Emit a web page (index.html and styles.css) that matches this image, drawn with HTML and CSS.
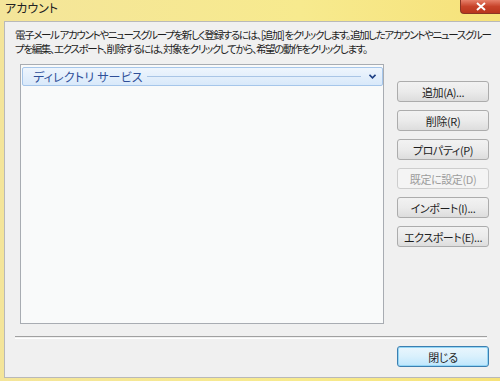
FILE: index.html
```html
<!DOCTYPE html>
<html lang="ja">
<head>
    <meta charset="UTF-8">
    <title>アカウント</title>
    <link rel="stylesheet" href="styles.css">
</head>
<body>
    <div class="window">
        <div class="titlebar">
            <span class="title">アカウント</span>
            <span class="close-btn">
                <svg width="12" height="9" viewBox="0 0 12 9"><path d="M2 1 L10 8 M10 1 L2 8" stroke="#fff" stroke-width="2"/></svg>
            </span>
        </div>
        <div class="dialog">
            <p class="intro">電子メール アカウントやニュースグループを新しく登録するには、[追加] をクリックします。追加したアカウントやニュースグループを編集、エクスポート、削除するには、対象をクリックしてから、希望の動作をクリックします。</p>
            <div class="main">
                <div class="account-list">
                    <div class="group-header">
                        <span class="group-name">ディレクトリ サービス</span>
                        <span class="group-line"></span>
                        <svg class="chevron" width="7" height="5" viewBox="0 0 7 5"><path d="M0.5 0.8 L3.5 3.8 L6.5 0.8" fill="none" stroke="#1d3f84" stroke-width="1.6"/></svg>
                    </div>
                </div>
                <div class="actions">
                    <button class="btn">追加(A)...</button>
                    <button class="btn">削除(R)</button>
                    <button class="btn">プロパティ(P)</button>
                    <button class="btn" disabled>既定に設定(D)</button>
                    <button class="btn">インポート(I)...</button>
                    <button class="btn">エクスポート(E)...</button>
                </div>
            </div>
            <div class="separator"></div>
            <div class="footer">
                <button class="btn btn-default">閉じる</button>
            </div>
        </div>
    </div>
</body>
</html>
```
FILE: styles.css
```css
body {
    margin: 0;
    font-family: "Noto Sans CJK JP", sans-serif;
    font-feature-settings: "palt";
    font-size: 12px;
    color: #1e1e1e;
    background-color: #f3e27c;
}
.window {
    width: 500px;
    height: 381px;
    display: flex;
    flex-direction: column;
    overflow: hidden;
    background: linear-gradient(to right, #f4e59a, #f7ea8e 60%, #f6e27a);
}
.titlebar {
    height: 21px;
    display: flex;
    align-items: flex-start;
}
.title {
    margin: 1px 0 0 5px;
    font-size: 12px;
    line-height: 14px;
    color: #222;
}
.close-btn {
    margin-left: auto;
    width: 39px;
    height: 13px;
    display: flex;
    align-items: center;
    justify-content: center;
    background: linear-gradient(#e7806a, #c7432a 50%, #b9361d);
    border: 1px solid #8a3524;
    border-top: none;
    border-right: none;
    border-radius: 0 0 0 4px;
}
.dialog {
    margin-left: 4px;
    height: 355px;
    border: 1px solid #b9b9b9;
    border-right: none;
    background-color: #f0f0f0;
}
.intro {
    margin: 6px 0 0 10px;
    width: 479px;
    height: 28px;
    font-size: 10.5px;
    line-height: 14px;
    letter-spacing: -1.35px;
    color: #1e1e1e;
}
.main {
    display: flex;
    margin: 8px 0 0 15px;
}
.account-list {
    width: 362px;
    height: 258px;
    border: 1px solid #a8acb2;
    background-color: #f9fafa;
}
.group-header {
    margin: 2px 0 0 1px;
    height: 17px;
    display: flex;
    align-items: center;
    padding: 0 6px 0 10px;
    border: 1px solid #a6c6ea;
    border-radius: 2px;
    background: linear-gradient(#eef5fd, #d9e9fa);
}
.group-name {
    font-size: 12px;
    color: #2f4f99;
    letter-spacing: 0.2px;
}
.group-line {
    flex: 1;
    height: 1px;
    margin: 0 8px 0 4px;
    background-color: #a9c5e6;
}
.actions {
    display: flex;
    flex-direction: column;
    gap: 8px;
    margin: 17px 0 0 13px;
}
.btn {
    width: 92px;
    height: 21px;
    padding: 0;
    white-space: nowrap;
    font-family: "Noto Sans CJK JP", sans-serif;
    font-feature-settings: "palt";
    font-size: 11px;
    letter-spacing: -0.4px;
    color: #1e1e1e;
    border: 1px solid #acacac;
    border-radius: 3px;
    background: linear-gradient(#f2f2f2, #ebebeb 50%, #dddddd);
}
.btn:disabled {
    color: #9c9c9c;
    border-color: #cdcdcd;
    background: #f4f4f4;
}
.separator {
    margin: 12px 0 0 10px;
    width: 472px;
    height: 1px;
    border-top: 1px solid #a0a0a0;
    border-bottom: 1px solid #ffffff;
}
.footer {
    display: flex;
    justify-content: flex-end;
    padding: 7px 11px 0 0;
}
.btn-default {
    border-color: #3c7fb1;
    background: linear-gradient(#eaf6fd, #d9f0fc 50%, #bee6fd);
    box-shadow: inset 0 0 0 1px #94d6f5;
}
```
